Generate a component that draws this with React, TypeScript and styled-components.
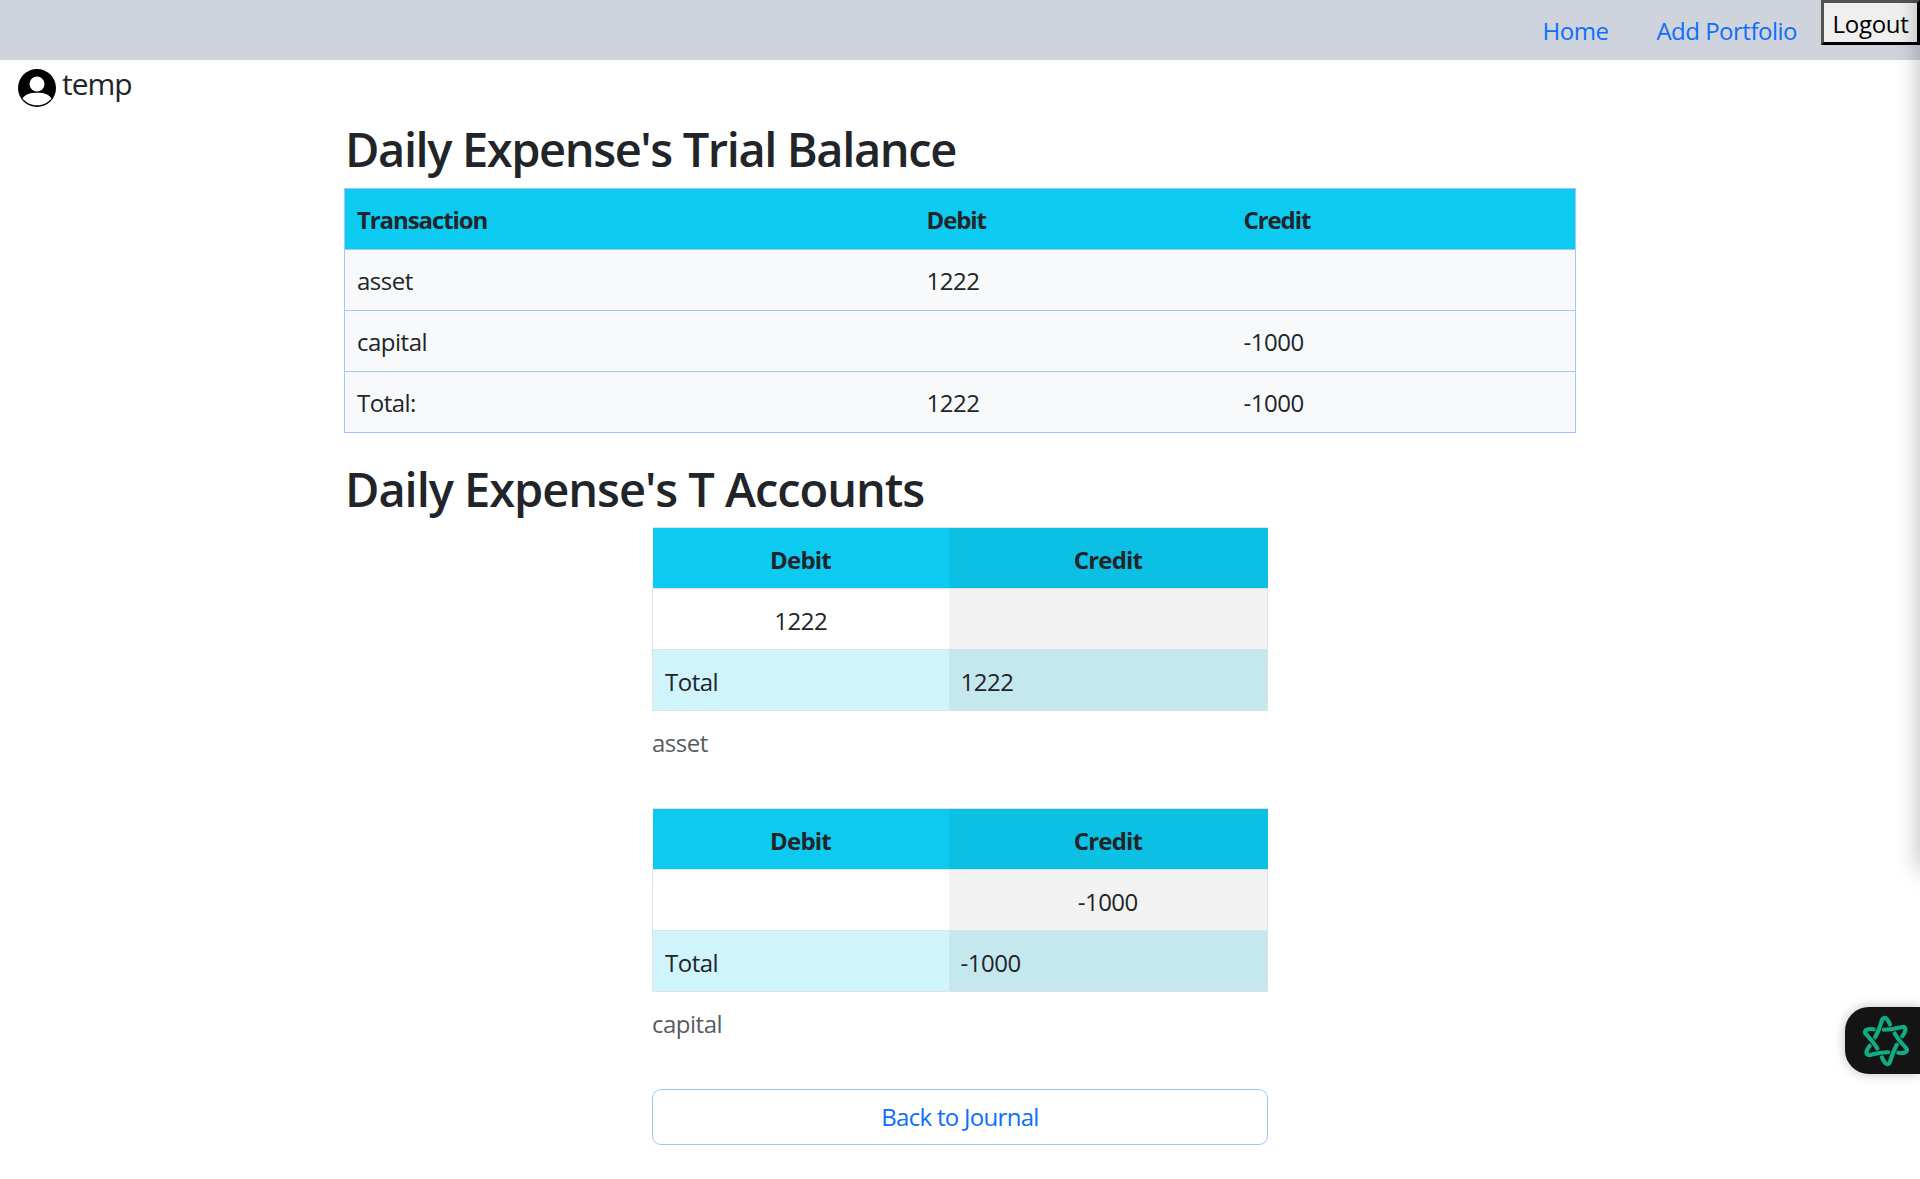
import React from 'react';
import styled, { createGlobalStyle } from 'styled-components';

const GlobalStyle = createGlobalStyle`
    * {
        box-sizing: border-box;
    }
    html,
    body {
        margin: 0;
        padding: 0;
        background: #fff;
        color: #212529;
        font-family: 'Open Sans', 'Noto Sans', sans-serif;
        font-size: 24px;
        line-height: 1.5;
        letter-spacing: -0.5px;
    }
`;

const accounts = [
    { name: 'asset', debit: '1222', credit: '', total: '1222' },
    { name: 'capital', debit: '', credit: '-1000', total: '-1000' },
];

const hookAngles = [0, 60, 120, 180, 240, 300];

const App = () => (
    <>
        <GlobalStyle />
        <EdgeShadow />
        <NavBar>
            <NavLink href="#">Home</NavLink>
            <NavLink href="#">Add Portfolio</NavLink>
            <LogoutButton type="button">Logout</LogoutButton>
        </NavBar>
        <UserRow>
            <svg width="38" height="38" viewBox="0 0 38 38">
                <circle cx="19" cy="19" r="19" fill="#000" />
                <circle cx="19" cy="15" r="7.500" fill="#fff" />
                <path d="M4.500 29.500C8 24.800 13 23.800 19 23.800s11 1 14.500 5.700C30 33.800 25 36.300 19 36.300S8 33.800 4.500 29.500z" fill="#fff" />
            </svg>
            <UserName>temp</UserName>
        </UserRow>
        <Container>
            <Heading>Daily Expense's Trial Balance</Heading>
            <TrialTable>
                <colgroup>
                    <col width="570" />
                    <col width="317" />
                    <col />
                </colgroup>
                <thead>
                    <tr>
                        <TrialHead>Transaction</TrialHead>
                        <TrialHead>Debit</TrialHead>
                        <TrialHead>Credit</TrialHead>
                    </tr>
                </thead>
                <tbody>
                    <tr>
                        <TrialCell>asset</TrialCell>
                        <TrialCell>1222</TrialCell>
                        <TrialCell />
                    </tr>
                    <tr>
                        <TrialCell>capital</TrialCell>
                        <TrialCell />
                        <TrialCell>-1000</TrialCell>
                    </tr>
                    <tr>
                        <TrialCell>Total:</TrialCell>
                        <TrialCell>1222</TrialCell>
                        <TrialCell>-1000</TrialCell>
                    </tr>
                </tbody>
            </TrialTable>
            <Heading $wide>Daily Expense's T Accounts</Heading>
            <AccountList>
                {accounts.map((account) => (
                    <AccountTable key={account.name}>
                        <colgroup>
                            <col width="296" />
                            <col />
                        </colgroup>
                        <thead>
                            <tr>
                                <AccountHead>Debit</AccountHead>
                                <AccountHead $active>Credit</AccountHead>
                            </tr>
                        </thead>
                        <tbody>
                            <tr>
                                <AccountCell $center>{account.debit}</AccountCell>
                                <AccountCell $center $active>
                                    {account.credit}
                                </AccountCell>
                            </tr>
                            <tr>
                                <AccountCell $total>Total</AccountCell>
                                <AccountCell $total $active>
                                    {account.total}
                                </AccountCell>
                            </tr>
                        </tbody>
                        <Caption>{account.name}</Caption>
                    </AccountTable>
                ))}
                <BackButton type="button">Back to Journal</BackButton>
            </AccountList>
        </Container>
        <ChatWidget>
            <svg width="52" height="54" viewBox="0 0 52 54" fill="none" stroke="#10ac84" strokeWidth="4.2" strokeLinecap="round" strokeLinejoin="round">
                {hookAngles.map((angle) => (
                    <path
                        key={angle}
                        transform={`rotate(${angle} 26 27)`}
                        d="M30 10.500C29 8 27.800 6 26.500 4.800C24.800 3.300 22.800 3.800 22 6C20.500 10.500 19.500 16 15.200 23.200"
                    />
                ))}
            </svg>
        </ChatWidget>
    </>
);

export default App;

const EdgeShadow = styled.div`
    position: fixed;
    left: 100%;
    top: -40px;
    width: 20px;
    height: 910px;
    box-shadow: 0 0 24px rgba(0, 0, 0, 0.3);
`;

const NavBar = styled.nav`
    height: 60px;
    background: #cfd3dc;
    display: flex;
    justify-content: flex-end;
    align-items: flex-start;
`;

const NavLink = styled.a`
    color: #0d6efd;
    text-decoration: none;
    padding: 13px 24px 0;
    line-height: 36px;
`;

const LogoutButton = styled.button`
    height: 45px;
    width: 99px;
    padding: 2px 0 0;
    background: #efefef;
    color: #000;
    border: 3px outset #000;
    font: inherit;
    line-height: 1;
    letter-spacing: -0.3px;
`;

const UserRow = styled.div`
    display: flex;
    align-items: flex-start;
    gap: 6px;
    padding: 9px 0 0 18px;
    height: 60px;
`;

const UserName = styled.span`
    font-size: 30px;
    line-height: 32px;
    margin-top: -1px;
    letter-spacing: -1px;
`;

const Container = styled.main`
    width: 1232px;
    margin: 0 auto;
`;

const Heading = styled.h2<{ $wide?: boolean }>`
    margin: 0 0 9px;
    padding: 1px 0 0 1px;
    font-size: 47px;
    font-weight: 600;
    line-height: 57.6px;
    letter-spacing: ${({ $wide }) => ($wide ? '-1.05px' : '-1.4px')};
`;

const TrialTable = styled.table`
    width: 100%;
    margin-bottom: 27px;
    border-collapse: collapse;
    table-layout: fixed;
    border: 1px solid #9ec5fe;
`;

const TrialHead = styled.th`
    height: 61px;
    padding: 13px 12px 11px;
    text-align: left;
    font-weight: 700;
    letter-spacing: -1.1px;
    background: #0dcaf0;
    border-bottom: 1px solid #9ec5fe;
`;

const TrialCell = styled.td`
    height: 61px;
    padding: 13px 12px 11px;
    background: #f8f9fa;
    border-bottom: 1px solid #9ec5fe;
`;

const AccountList = styled.div`
    width: 616px;
    margin: 0 auto;
`;

const AccountTable = styled.table`
    width: 100%;
    margin-bottom: 24px;
    border-collapse: collapse;
    table-layout: fixed;
    caption-side: bottom;
`;

const AccountHead = styled.th<{ $active?: boolean }>`
    height: 61px;
    padding: 14px 12px 10px;
    font-weight: 700;
    letter-spacing: -0.8px;
    text-align: center;
    background: ${({ $active }) => ($active ? '#0cc0e4' : '#0dcaf0')};
    border: 1px solid #dee2e6;
    border-width: 1px 0;
`;

const AccountCell = styled.td<{ $active?: boolean; $center?: boolean; $total?: boolean }>`
    height: 61px;
    padding: 14px 12px 10px;
    text-align: ${({ $center }) => ($center ? 'center' : 'left')};
    background: ${({ $active, $total }) => {
        if ($total) return $active ? '#c5e8ef' : '#cff4fc';
        return $active ? '#f2f2f2' : '#fff';
    }};
    border: 1px solid #dee2e6;
    border-width: 1px 0;
    &:first-child {
        border-left-width: 1px;
    }
    &:last-child {
        border-right-width: 1px;
    }
`;

const Caption = styled.caption`
    padding: 14px 0 23px;
    color: #595c5f;
    text-align: left;
`;

const BackButton = styled.button`
    display: block;
    width: 100%;
    height: 56px;
    padding: 0;
    background: #fff;
    color: #0d6efd;
    border: 1.5px solid #9ec5fe;
    border-radius: 9px;
    font: inherit;
    letter-spacing: -0.7px;
`;

const ChatWidget = styled.div`
    position: fixed;
    right: 0;
    top: 1007px;
    width: 75px;
    height: 67px;
    padding: 7px 0 0 15px;
    background: #141414;
    border-radius: 24px 0 0 24px;
    box-shadow: 0 0 12px rgba(0, 0, 0, 0.25);
`;
